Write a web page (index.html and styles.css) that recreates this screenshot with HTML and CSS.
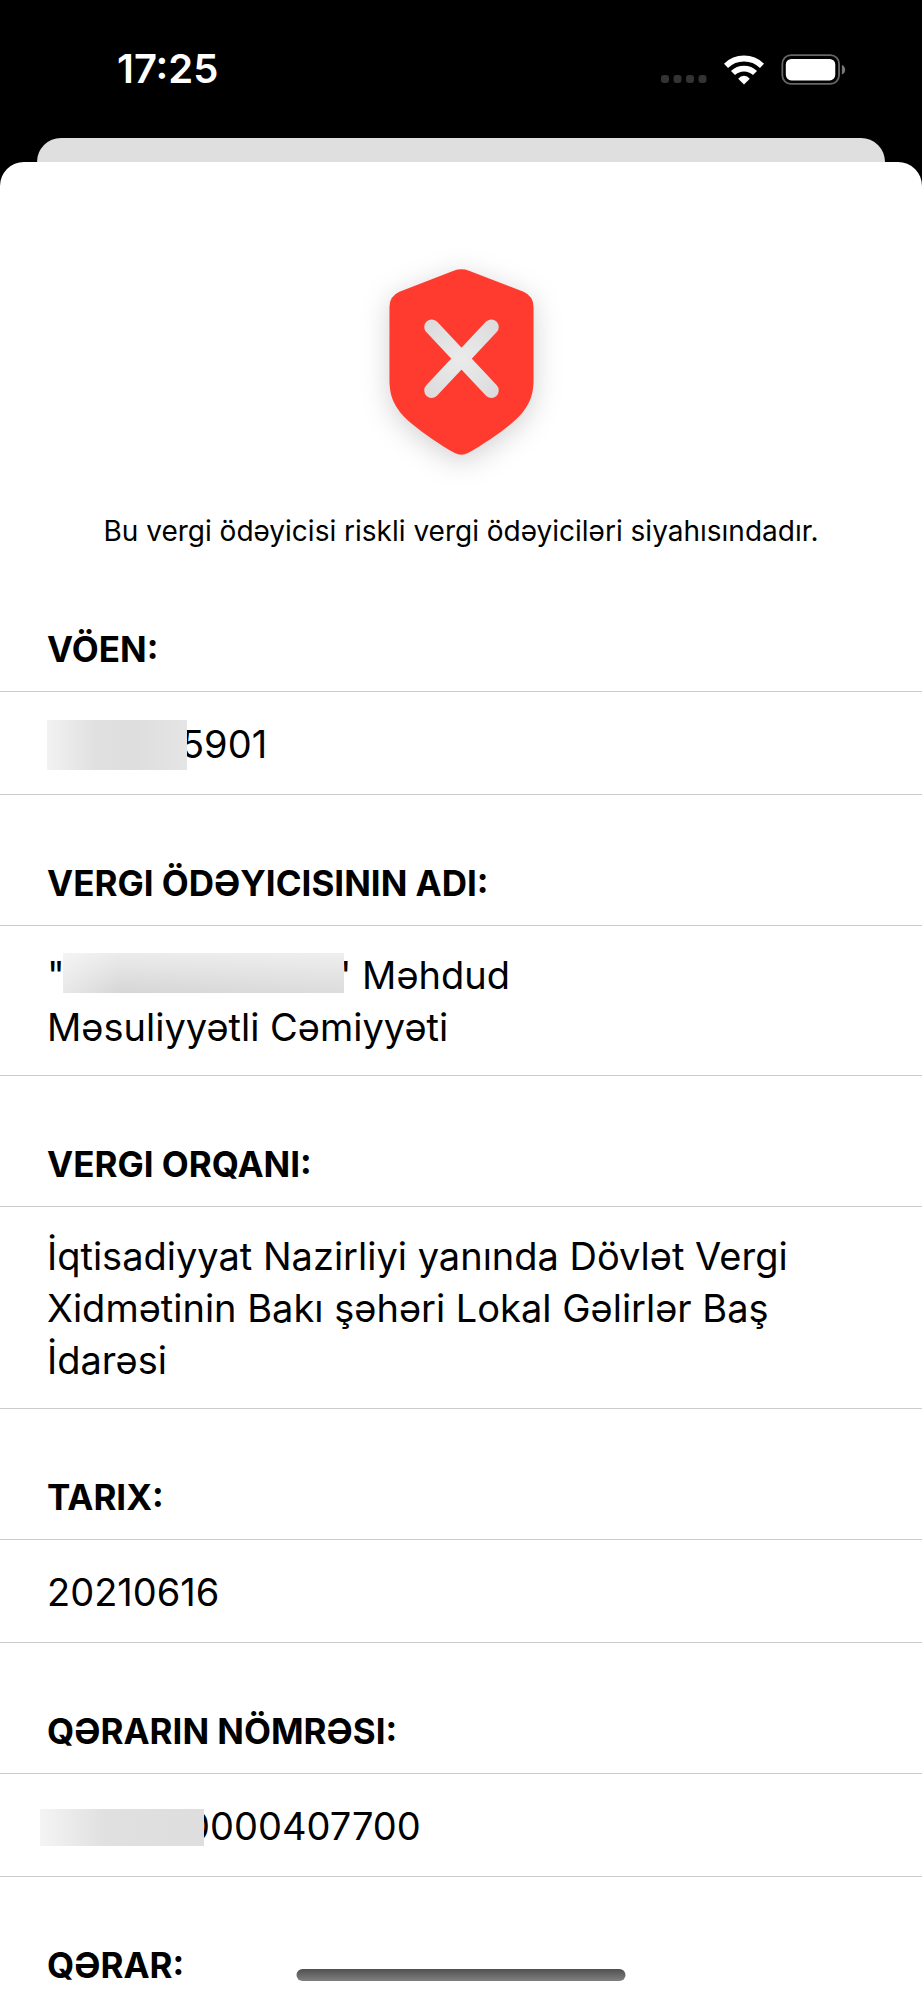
FILE: index.html
```html
<!DOCTYPE html>
<html lang="az">
<head>
<meta charset="utf-8">
<meta name="viewport" content="width=device-width, initial-scale=1">
<title>Vergi ödəyicisi</title>
<link rel="stylesheet" href="styles.css">
</head>
<body>
<div class="screen">
  <header class="status-bar">
    <time class="clock">17:25</time>
    <div class="indicators">
      <svg class="signal" viewBox="0 0 46 10" width="46" height="10" aria-hidden="true">
        <rect x="0" width="8" height="8" rx="3"/><rect x="12.5" width="8" height="8" rx="3"/><rect x="25" width="8" height="8" rx="3"/><rect x="37.5" width="8" height="8" rx="3"/>
      </svg>
      <svg class="wifi" viewBox="790 160 120 90" width="40" height="30" aria-hidden="true">
        <g fill="none" stroke="#fff" stroke-width="17.5">
          <path d="M796 192.500A77.500 77.500 0 0 1 904 192.500"/>
          <path d="M817 214A47.500 47.500 0 0 1 883 214"/>
        </g>
        <path d="M850 248.500L832.500 231.500Q840 222 850 222Q860 222 867.500 231.500Z" fill="#fff"/>
      </svg>
      <svg class="battery" viewBox="960 158 196 94" width="65" height="31" aria-hidden="true">
        <rect x="963.500" y="161.500" width="172" height="87" rx="26" fill="none" stroke="#666" stroke-width="5.500"/>
        <rect x="974" y="173" width="150" height="65" rx="17" fill="#fff"/>
        <path d="M1144 191Q1154 195 1154 205.500Q1154 216 1144 220Z" fill="#777"/>
      </svg>
    </div>
  </header>
  <div class="back-sheet"></div>
  <main class="sheet">
    <section class="verdict">
      <svg class="shield" viewBox="141 116 435 559" width="145" height="186" role="img" aria-label="Riskli">
        <defs>
          <radialGradient id="cross" gradientUnits="userSpaceOnUse" cx="358" cy="386" r="165">
            <stop offset="0" stop-color="#ebebeb"/><stop offset="1" stop-color="#dadada"/>
          </radialGradient>
        </defs>
        <path fill="#ff3b30" d="M335 121Q358 113 381 121L545 184Q575 197 575 230V450C575 505 555 542 505 583C471 611 425 642 378 669Q358 679 338 669C291 642 246 611 212 583C162 542 142 505 142 450V230Q142 197 172 184Z"/>
        <path d="M269 290L448 481M448 290L269 481" fill="none" stroke="url(#cross)" stroke-width="45" stroke-linecap="round"/>
      </svg>
      <p class="message">Bu vergi ödəyicisi riskli vergi ödəyiciləri siyahısındadır.</p>
    </section>
    <dl class="details">
      <dt>VÖEN:</dt>
      <dd><p><span class="mask mask-id"></span>5901</p></dd>
      <dt>VERGI ÖDƏYICISININ ADI:</dt>
      <dd><p>"<span class="mask mask-name"></span>" Məhdud<br>Məsuliyyətli Cəmiyyəti</p></dd>
      <dt>VERGI ORQANI:</dt>
      <dd><p>İqtisadiyyat Nazirliyi yanında Dövlət Vergi Xidmətinin Bakı şəhəri Lokal Gəlirlər Baş İdarəsi</p></dd>
      <dt>TARIX:</dt>
      <dd><p>20210616</p></dd>
      <dt>QƏRARIN NÖMRƏSI:</dt>
      <dd><p><span class="mask mask-number"></span>0000407700</p></dd>
      <dt class="last">QƏRAR:</dt>
    </dl>
  </main>
  <div class="home-indicator"></div>
</div>
</body>
</html>
```
FILE: styles.css
```css
* { box-sizing: border-box; }

body {
  margin: 0;
  background: #000;
  color: #000;
  font-family: Inter, "Liberation Sans", sans-serif;
}

.screen {
  display: flex;
  flex-direction: column;
  min-height: 100vh;
}

.status-bar {
  display: flex;
  align-items: center;
  justify-content: space-between;
  height: 138px;
  padding: 0 76px 0 117px;
  color: #fff;
}

.clock {
  font-size: 40px;
  font-weight: 600;
  line-height: 48px;
}

.indicators {
  display: flex;
  align-items: flex-end;
  gap: 17px;
}

.signal { fill: #333; }

.back-sheet {
  height: 24px;
  margin: 0 37px;
  border-radius: 24px 24px 0 0;
  background: #dfdfdf;
}

.sheet {
  flex: 1;
  border-radius: 24px 24px 0 0;
  background: #fff;
}

.verdict {
  display: flex;
  flex-direction: column;
  align-items: center;
  gap: 56px;
  padding: 107px 24px 0;
}

.shield {
  overflow: visible;
  filter: drop-shadow(0 6px 14px rgb(0 0 0 / 18%));
}

.message {
  margin: 0;
  font-size: 28px;
  line-height: 40px;
  text-align: center;
}

.details { margin: 10px 0 0; }

dt {
  display: flex;
  align-items: flex-end;
  height: 130px;
  padding: 0 47px 20px;
  font-size: 35px;
  font-weight: 700;
  line-height: 44px;
}

dt.last {
  height: 122px;
  padding-bottom: 12px;
}

dd {
  display: flex;
  align-items: center;
  min-height: 104px;
  margin: 0;
  padding: 23px 47px 22px;
  border: solid #ccc;
  border-width: 1px 0;
  font-size: 38px;
  line-height: 52px;
}

dd p { margin: 0; }

.mask {
  display: inline-block;
  position: relative;
  vertical-align: middle;
}

.mask-id {
  width: 140px;
  height: 50px;
  margin: -10px -6px -6px 0;
  background: linear-gradient(90deg, #f2f2f2, #e0e0e0 35%, #dedede 65%, #e5e5e5);
}

.mask-name {
  width: 281px;
  height: 40px;
  margin: -14px -10px -2px -2px;
  background: linear-gradient(#fff8, #fff0), linear-gradient(90deg, #e8e8e8, #d6d6d6 20%, #dcdcdc);
}

.mask-number {
  width: 164px;
  height: 37px;
  margin: -10px -18px -6px -7px;
  background: linear-gradient(90deg, #f4f4f4, #e0e0e0 40%, #dedede);
}

.home-indicator {
  position: fixed;
  bottom: 19px;
  left: 50%;
  width: 329px;
  height: 12px;
  border-radius: 6px;
  background: linear-gradient(#505050, #808080);
  transform: translateX(-50%);
}
```
